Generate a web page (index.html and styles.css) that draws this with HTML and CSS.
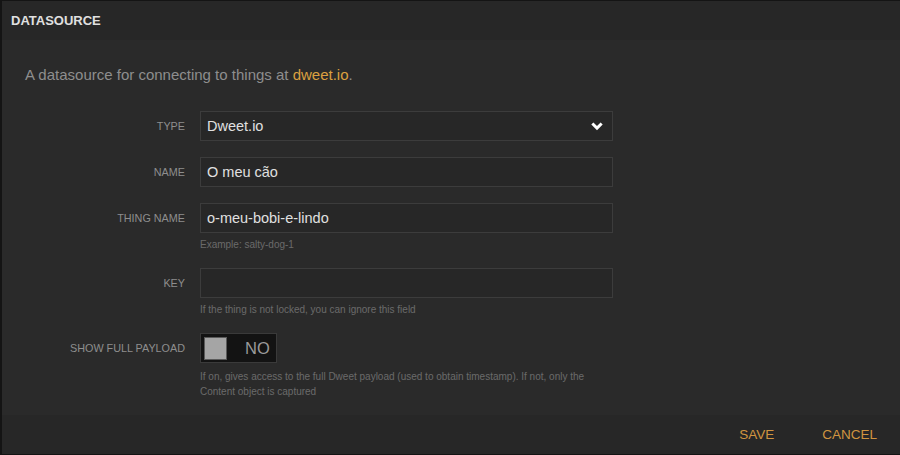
FILE: index.html
```html
<!DOCTYPE html>
<html>
<head>
<meta charset="utf-8">
<link rel="stylesheet" href="styles.css">
</head>
<body>
<div class="modal">
  <div class="modal-header">DATASOURCE</div>
  <div class="modal-body">
    <p class="desc">A datasource for connecting to things at <a class="link">dweet.io</a>.</p>
    <div class="form">
      <div class="row">
        <label class="label">TYPE</label>
        <div class="field">
          <div class="input select">
            <span>Dweet.io</span>
            <svg class="chev" width="12" height="9" viewBox="0 0 12 9"><path d="M0.3 2.6 L2.4 0.5 L6 4.1 L9.6 0.5 L11.7 2.6 L6 8.3 Z" fill="#ffffff"/></svg>
          </div>
        </div>
      </div>
      <div class="row">
        <label class="label">NAME</label>
        <div class="field"><div class="input">O meu cão</div></div>
      </div>
      <div class="row">
        <label class="label">THING NAME</label>
        <div class="field">
          <div class="input">o-meu-bobi-e-lindo</div>
          <div class="hint">Example: salty-dog-1</div>
        </div>
      </div>
      <div class="row">
        <label class="label">KEY</label>
        <div class="field">
          <div class="input"></div>
          <div class="hint">If the thing is not locked, you can ignore this field</div>
        </div>
      </div>
      <div class="row">
        <label class="label">SHOW FULL PAYLOAD</label>
        <div class="field">
          <div class="toggle"><span class="knob"></span><span class="toggle-text">NO</span></div>
          <div class="hint wide">If on, gives access to the full Dweet payload (used to obtain timestamp). If not, only the Content object is captured</div>
        </div>
      </div>
    </div>
  </div>
  <div class="modal-footer">
    <span class="btn">SAVE</span>
    <span class="btn">CANCEL</span>
  </div>
</div>
</body>
</html>
```
FILE: styles.css
```css
html, body {
  margin: 0;
  padding: 0;
  background: #141414;
  height: 100%;
  overflow: hidden;
}
body {
  font-family: "Liberation Sans", Arial, sans-serif;
  padding: 1px 0 1px 2px;
  box-sizing: border-box;
}
.modal {
  height: 453px;
  background: #2a2a2a;
  display: flex;
  flex-direction: column;
}
.modal-header {
  height: 39px;
  background: #272727;
  color: #e0e0e0;
  font-weight: bold;
  font-size: 13px;
  line-height: 39px;
  padding-left: 9px;
}
.modal-body {
  flex: 1;
  padding: 25px 25px 0 25px;
}
.desc {
  margin: 0 0 0 -2px;
  font-size: 15px;
  line-height: 20px;
  color: #8e8e8e;
}
.link {
  color: #dba040;
}
.form {
  margin-top: 26px;
  display: flex;
  flex-direction: column;
  gap: 16px;
}
.row {
  display: flex;
  align-items: flex-start;
  gap: 15px;
}
.label {
  width: 158px;
  flex: none;
  text-align: right;
  font-size: 10.8px;
  color: #8e8e8e;
  line-height: 30px;
  height: 30px;
}
.field {
  width: 413px;
}
.input {
  box-sizing: border-box;
  height: 30px;
  border: 1px solid #3c3c3c;
  background: #272727;
  color: #e0e0e0;
  font-size: 14.5px;
  line-height: 28px;
  padding-left: 6px;
}
.select {
  display: flex;
  align-items: center;
  justify-content: space-between;
  padding-right: 9px;
}
.chev {
  display: block;
}
.hint {
  margin-top: 4px;
  font-size: 10px;
  line-height: 15px;
  color: #6a6a6a;
}
.hint.wide {
  margin-top: 6px;
}
.toggle {
  box-sizing: border-box;
  width: 77px;
  height: 30px;
  background: #131313;
  border: 1px solid #3a3a3a;
  display: flex;
  align-items: center;
  padding-left: 3px;
}
.knob {
  box-sizing: border-box;
  width: 23px;
  height: 23px;
  background: #a5a5a5;
  border: 1px solid #5a5a5a;
}
.toggle-text {
  margin-left: 18px;
  font-size: 16.5px;
  color: #9a9a9a;
}
.modal-footer {
  height: 39px;
  background: #272727;
  display: flex;
  justify-content: flex-end;
  align-items: center;
  gap: 48px;
  padding-right: 23px;
}
.btn {
  color: #d09540;
  font-size: 13.5px;
}
```
